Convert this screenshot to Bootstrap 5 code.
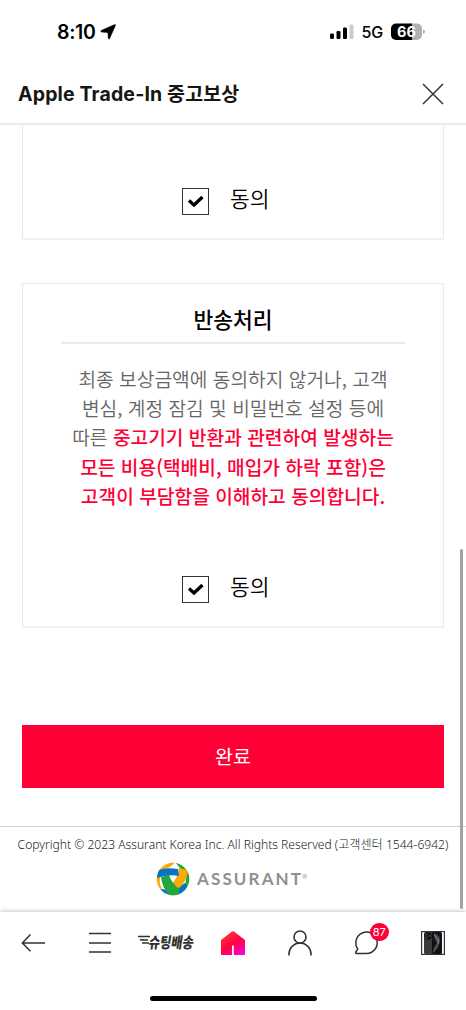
<!DOCTYPE html>
<html lang="ko">
<head>
<meta charset="utf-8">
<meta name="viewport" content="width=device-width, initial-scale=1">
<title>Apple Trade-In 중고보상</title>
<link href="https://cdn.jsdelivr.net/npm/bootstrap@5.3.0/dist/css/bootstrap.min.css" rel="stylesheet">
<style>
  body { font-family: "Noto Sans CJK KR", sans-serif; color: #000; background: #fff; height: 1010px; overflow: hidden; }
  svg { display: block; flex: none; }
  .statusbar { height: 64px; padding: 0 40px 0 57px; font-family: Inter, sans-serif; }
  .clock { font-size: 19.5px; font-weight: 600; line-height: 64px; letter-spacing: -.3px; }
  .network { font-size: 16px; font-weight: 500; letter-spacing: -.2px; }
  .titlebar { height: 61px; padding: 0 21px 0 18px; border-bottom: 2px solid #ebebee; }
  .titlebar h1 { font: 700 19.5px/60px Inter, "Noto Sans CJK KR", sans-serif; color: #161616; letter-spacing: .15px; }
  .page { height: 787px; padding: 0 22px; }
  .terms { border: 1px solid #e9e9e9; border-radius: 0; border-bottom-width: 2px; border-bottom-color: #f1f1f1; }
  .terms-prev { height: 115px; border-top: 0; padding-bottom: 23px; }
  .terms-return { height: 345px; margin-top: 43px; padding: 18px 38px 23px; }
  .terms h2 { font-size: 21.5px; font-weight: 500; line-height: 34px; height: 42px; border-bottom: 2px solid #ebebeb; }
  .terms p { font-size: 19.2px; line-height: 29.2px; font-weight: 350; color: #666; margin: 21px -20px 0; }
  .terms strong { font-weight: 500; color: #ff0036; }
  .agree { gap: 20.5px; height: 30px; margin-right: 14px; }
  .agree span { font-size: 21.5px; font-weight: 350; line-height: 25px; }
  .done { height: 63px; margin-top: 97px; border-radius: 0; padding: 0 0 2px; background: #ff0036; color: #fff; font-size: 19.5px; line-height: 1; }
  .legal { margin: 38px -22px 0; border-top: 1px solid #d2d2d2; }
  .legal small { font-family: "Noto Sans", "Noto Sans CJK KR", sans-serif; font-size: 12.1px; line-height: 18px; margin-top: 9px; font-weight: 300; color: #222; white-space: nowrap; }
  .maker { margin-top: 8px; }
  .tabbar { height: 98px; box-shadow: 0 -1px 4px rgba(0,0,0,.22); position: relative; }
  .tabs { height: 62px; }
  .shoot { font-size: 15px; font-weight: 900; }
  .count { position: absolute; left: 16px; top: -7px; width: 19px; height: 18px; border-radius: 9px; background: #ff0036; color: #fff; font: 400 11px/18px Inter, sans-serif; text-align: center; }
  .homebar { width: 167px; height: 5px; border-radius: 3px; background: #000; margin-top: 22px; }
  .scrollthumb { position: absolute; left: 459.5px; top: 549px; width: 3.5px; height: 360px; border-radius: 2px; background: #a3a3a3; }
</style>
</head>
<body>
<div class="statusbar d-flex align-items-center justify-content-between">
  <div class="d-flex align-items-center"><span class="clock">8:10</span>
    <svg width="16" height="16" viewBox="0 0 16 16" class="ms-1"><path d="M1.200 6.600 14.300.700Q15.900.200 15.300 1.800L9.600 14.500Q8.800 16 8.300 14.300L7.900 8.500 1.700 8Q0 7.500 1.200 6.600Z" stroke="#000" stroke-width=".6"/></svg>
  </div>
  <div class="d-flex align-items-center">
    <svg width="24" height="16" viewBox="0 0 24 16"><rect y="9.500" width="4" height="5.500" rx="1.200"/><rect x="6.500" y="7" width="4" height="8" rx="1.200"/><rect x="13" y="3.500" width="4" height="11.500" rx="1.200"/><rect x="19.500" y=".500" width="4" height="14.500" rx="1.200" fill="#ccc"/></svg>
    <span class="network ms-2">5G</span>
    <svg width="35" height="18" viewBox="0 0 35 18" class="ms-2"><clipPath id="cell"><rect x="0" y=".5" width="31" height="16.500" rx="5"/></clipPath><g clip-path="url(#cell)"><rect width="21" height="18"/><rect x="21" width="10" height="18" fill="#b1b1b1"/></g><path d="M32 6.500Q34 7 34 8.800T32 11Z" fill="#b1b1b1"/><text x="15.500" y="14.100" text-anchor="middle" fill="#fff" font-family="Inter" font-size="14.500" font-weight="700">66</text></svg>
  </div>
</div>
<header class="titlebar d-flex align-items-center justify-content-between">
  <h1 class="m-0">Apple Trade-In 중고보상</h1>
  <svg width="24" height="24" viewBox="0 0 24 24" stroke="#333" stroke-width="1.5"><path d="M2 2 22 22M22 2 2 22"/></svg>
</header>
<main class="page">
  <section class="terms terms-prev d-flex align-items-end justify-content-center">
    <label class="agree d-flex"><svg width="27" height="27" viewBox="0 0 27 27" fill="none" stroke="#000" class="mt-auto"><rect x=".5" y=".5" width="26" height="26" stroke="#333"/><path d="m7 12.5 5 4.500 8.500-8" stroke-width="3.300"/></svg><span>동의</span></label>
  </section>
  <section class="terms terms-return d-flex flex-column text-center">
    <h2 class="m-0">반송처리</h2>
    <p>최종 보상금액에 동의하지 않거나, 고객<br>변심, 계정 잠김 및 비밀번호 설정 등에<br>따른 <strong>중고기기 반환과 관련하여 발생하는<br>모든 비용(택배비, 매입가 하락 포함)은<br>고객이 부담함을 이해하고 동의합니다.</strong></p>
    <label class="agree d-flex justify-content-center mt-auto"><svg width="27" height="27" viewBox="0 0 27 27" fill="none" stroke="#000" class="mt-auto"><rect x=".5" y=".5" width="26" height="26" stroke="#333"/><path d="m7 12.5 5 4.500 8.500-8" stroke-width="3.300"/></svg><span>동의</span></label>
  </section>
  <button type="button" class="done btn w-100">완료</button>
  <footer class="legal d-flex flex-column align-items-center">
    <small>Copyright © 2023 Assurant Korea Inc. All Rights Reserved (고객센터 1544-6942)</small>
    <svg class="maker" width="154" height="34" viewBox="0 0 154 34">
      <clipPath id="globe"><circle cx="17" cy="17" r="16.3"/></clipPath>
      <g clip-path="url(#globe)">
        <circle cx="17" cy="17" r="17" fill="#fff"/>
        <path d="M19 0Q27 1 34 12V23L27 27Q34 14 24 6Z" fill="#22a83a"/>
        <path d="M0 26V10L10 0H20L14 5Q2 10 4 22L6 27Z" fill="#f9aa08"/>
        <path d="M4 27Q18 29 29 21L32 26 24 35H8Z" fill="#0872c5"/>
        <path d="M23 6 32 8Q31 20 22 27L16 22Q22 15 23 6Z" fill="#f9aa08"/>
        <path d="M5 15 13 13Q15 20 23 27V34H14Q6 26 5 15Z" fill="#22a83a"/>
        <path d="M2 8Q12 5 22 7L23 14Q12 12 1 16Z" fill="#0872c5"/>
      </g>
      <text x="41" y="23" font-family="Lato" font-size="17" font-weight="700" fill="#909090" textLength="104">ASSURANT</text>
      <text x="146" y="18" font-family="Inter" font-size="8" font-weight="700" fill="#aaa">®</text>
    </svg>
  </footer>
</main>
<nav class="tabbar bg-white d-flex flex-column align-items-center">
  <div class="tabs w-100 row g-0 align-items-center">
    <div class="col d-flex justify-content-center"><svg width="25" height="22" viewBox="0 0 25 22" fill="none" stroke="#333" stroke-width="1.500"><path d="M24 11H1.500M9.500 2.500 1.300 11l8.200 8.200"/></svg></div>
    <div class="col d-flex justify-content-center"><svg width="24" height="22" viewBox="0 0 24 22" stroke="#333" stroke-width="1.600"><path d="M1 1.500h22M1 11h22M1 20h22"/></svg></div>
    <div class="col d-flex justify-content-center"><svg width="60" height="30" viewBox="0 0 60 30"><path d="M2 8.500h12M4 11.500q1 .5 8 .5M6 15h7" fill="none" stroke="#303030" stroke-width="1.700"/><text class="shoot" transform="translate(12 19.500) skewX(-9)" textLength="45" lengthAdjust="spacingAndGlyphs" fill="#303030">슈팅배송</text></svg></div>
    <div class="col d-flex justify-content-center"><svg width="26" height="26" viewBox="0 0 26 26"><defs><linearGradient id="homeFill" x1=".2" y1=".1" x2=".8" y2="1"><stop stop-color="#ff3535"/><stop offset=".5" stop-color="#ff0044"/><stop offset="1" stop-color="#ff00d0"/></linearGradient></defs><path d="M1 10 12 1.600q1-.6 2 0L25 10v14q0 1-1 1H13.800v-9.500h-1.700V25H2q-1 0-1-1Z" fill="url(#homeFill)"/></svg></div>
    <div class="col d-flex justify-content-center"><svg width="26" height="26" viewBox="0 0 26 26" fill="none" stroke="#333" stroke-width="1.600"><circle cx="13" cy="7" r="6"/><path d="M2 25.500V24a11 11 0 0 1 22 0v1.500"/></svg></div>
    <div class="col d-flex justify-content-center"><div class="position-relative"><svg width="25" height="26" viewBox="0 0 25 26" fill="none" stroke="#333" stroke-width="1.500"><path d="M12.500 23.500A10.700 10.700 0 1 0 3.800 19L1.800 22q-.6 1.500 1 1.500Z"/></svg><span class="count">87</span></div></div>
    <div class="col d-flex justify-content-center"><svg width="24" height="24" viewBox="0 0 24 24"><rect x=".6" y=".6" width="22.800" height="22.800" fill="#fff" stroke="#333" stroke-width="1.200"/><rect x="3" y="1" width="10" height="22" rx="1.500" fill="#3c3b3a"/><rect x="3.500" y="1.500" width="7" height="7" rx="2" fill="#111"/><g fill="#4d4d4d"><circle cx="5.500" cy="3.500" r="1.100"/><circle cx="5.500" cy="6.500" r="1.100"/><circle cx="8.700" cy="5" r="1.100"/></g><rect x="11" y="1" width="10" height="22" rx="1.500" fill="#111"/><path d="M13 2q8 3 5.500 10Q17 18 12 22q0-5 4-10-3-4-3-10" fill="#454b5a"/><path d="M13 4q6 5 4 9" fill="none" stroke="#9699a2" stroke-width=".8"/></svg></div>
  </div>
  <div class="homebar"></div>
</nav>
<div class="scrollthumb"></div>
<script src="https://cdn.jsdelivr.net/npm/bootstrap@5.3.0/dist/js/bootstrap.bundle.min.js"></script>
</body>
</html>
